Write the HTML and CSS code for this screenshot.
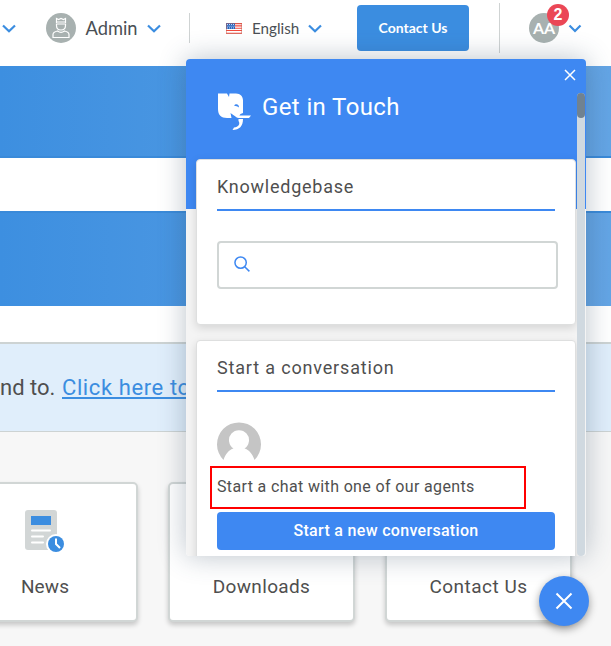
FILE: index.html
```html
<!DOCTYPE html>
<html lang="en">
<head>
<meta charset="utf-8">
<title>Help Center</title>
<link rel="stylesheet" href="styles.css">
</head>
<body>
<header class="topbar">
  <svg class="chev chev-first" viewBox="0 0 14 9"><path d="M1 1.500 7 7.300l6-5.800"/></svg>
  <svg class="avatar" viewBox="0 0 30 30"><circle cx="15" cy="15" r="15" fill="#a8b1b0"/><g fill="none" stroke="#fff" stroke-width="1.200"><path d="M10.500 10V5.500l2 1L15 5.500l2.500 1 2-1V10M10.500 9h9M10.500 11h9v1.500c0 6-9 6-9 0zM7 24.500v-3c0-2 2-3 4.500-3.500 2 1.500 5 1.500 7 0 2.500.5 4.500 1.500 4.500 3.500v3z"/></g></svg>
  <span class="name">Admin</span>
  <svg class="chev chev-name" viewBox="0 0 14 9"><path d="M1 1.500 7 7.300l6-5.800"/></svg>
  <i class="divider"></i>
  <svg class="flag" viewBox="0 0 16 11"><path fill="#fff" d="M0 0h16v11H0z"/><path stroke="#f3483c" stroke-width="1.100" d="M0 .6h16M0 2.900h16M0 5.200h16M0 7.500h16M0 10.200h16"/><path fill="#2864bd" d="M0 0h9v6H0z"/><path stroke="#c9ddf5" stroke-dasharray="1 1" d="M1 1.500h7M1.500 3.200h7M1 4.900h7"/><path fill="none" stroke="#c46357" stroke-opacity=".5" d="M.5.5h15v10H.5z"/></svg>
  <span class="lang">English</span>
  <svg class="chev chev-lang" viewBox="0 0 14 9"><path d="M1 1.500 7 7.300l6-5.800"/></svg>
  <button class="contact">Contact Us</button>
  <i class="divider tall"></i>
  <div class="initials">AA<b class="badge">2</b></div>
  <svg class="chev chev-user" viewBox="0 0 14 9"><path d="M1.500 1.500 7 7l5.500-5.500"/></svg>
</header>
<section class="hero"><div class="hero-search"></div></section>
<section class="notice"><span class="notice-text">nd to. </span><a class="notice-link">Click here to</a></section>
<section class="cards">
  <article class="card">
    <svg class="news" viewBox="0 0 42 44"><rect width="32" height="40" rx="3" fill="#d2d6d6"/><path fill="#3b8de0" d="M6 6h20v9H6z"/><path stroke="#fff" stroke-width="2" stroke-linecap="round" d="M7 20.500h18M7 26.500h11M7 32.500h11"/><circle cx="31" cy="34" r="10" fill="#fff"/><circle cx="31" cy="34" r="8" fill="#3b8de0"/><path fill="none" stroke="#fff" stroke-width="2" d="M31 28.500V34l4 4"/></svg>
    <span class="label label-news">News</span>
  </article>
  <article class="card"><span class="label label-down">Downloads</span></article>
  <article class="card"><span class="label label-contact">Contact Us</span></article>
</section>

<aside class="widget">
  <div class="widget-head">
    <svg class="logo" viewBox="0 0 34 38"><path fill="#fff" d="M0 .5h9l2 3.500.500-3.500H18c4.500 0 7 3 7 7V20l-2.500 1-3 4L16 22.500 12.500 20l1 5H9c-6 0-9-3-9-9zM20.500 22.500H33L31 25H20zM20.500 26H25c0 7-3.500 11-10.500 11l1.500-2.500c4.500-.5 6.500-3.500 4.500-6.500z"/><path fill="#3e88f2" d="M16 12.500c1.500-2 5-2 5 2-1.500-1-3-1.500-5-2z"/></svg>
    <h1 class="widget-title">Get in Touch</h1>
    <svg class="close" viewBox="0 0 12 12"><path d="m1 1 10 10M11 1 1 11"/></svg>
  </div>
  <div class="panel panel-kb">
    <h2 class="panel-title title-kb">Knowledgebase</h2>
    <div class="search"><svg viewBox="0 0 18 18"><circle cx="7" cy="7" r="6"/><path d="m11.300 11.300 5 5"/></svg></div>
  </div>
  <div class="panel panel-chat">
    <h2 class="panel-title title-chat">Start a conversation</h2>
    <svg class="agent" viewBox="0 0 44 44"><path fill="#c5c5c5" fill-rule="evenodd" d="M6.500 38A22 22 0 1 1 37.500 38C35.500 32 32 27.500 27.500 26.500a10 10 0 1 0-11 0C12 27.500 8.500 32 6.500 38z"/></svg>
    <div class="agents"><span class="agents-text">Start a chat with one of our agents</span></div>
    <button class="start"><span>Start a new conversation</span></button>
  </div>
  <i class="track"><i class="thumb"></i></i>
</aside>
<button class="launcher" aria-label="Close"><svg viewBox="0 0 18 18"><path d="m1.500 1.500 15 15M16.500 1.500l-15 15"/></svg></button>
</body>
</html>
```

FILE: styles.css
```css
* { box-sizing: border-box; }
body { margin: 0; width: 611px; height: 646px; overflow: hidden; position: relative; background: #fff; font-family: Roboto, sans-serif; color: #4f4f4f; }
button { border: 0; padding: 0; }
h1, h2 { margin: 0; font-weight: 400; }
svg { display: block; flex: none; }

.topbar { height: 66px; padding-bottom: 10px; display: flex; align-items: center; font-family: Lato, sans-serif; color: #4a4f55; white-space: nowrap; }
.topbar > * { flex: none; }
.chev { width: 14px; height: 9px; fill: none; stroke: #3b8de0; stroke-width: 2.200; }
.chev-first { margin-left: 2px; }
.avatar { width: 30px; height: 30px; margin-left: 30px; }
.name { margin-left: 9.500px; width: 61px; font-size: 18.300px; }
.divider { width: 1px; height: 30px; background: #cfd3d3; margin-left: 28.500px; }
.flag { width: 16px; height: 11px; margin-left: 36px; }
.lang { margin-left: 10px; width: 56px; font-size: 15.200px; }
.contact { width: 112px; height: 46px; margin-left: 35px; padding-bottom: 1px; border-radius: 4px; background: #3b8de0; color: #fff; font: 700 14px Lato, sans-serif; }
.tall { height: 50px; margin-left: 30px; }
.initials { position: relative; width: 30px; height: 30px; margin-left: 29px; border-radius: 50%; background: #a8b1b0; color: #fff; font: 700 16px/30px Lato, sans-serif; text-align: center; }
.badge { position: absolute; left: 18px; top: -9px; width: 22px; height: 22px; border-radius: 50%; background: #eb4756; font: 700 16px/21px "Liberation Sans", sans-serif; }
.chev-user { margin-left: 9px; }

.hero { height: 240px; padding-top: 90px; background: linear-gradient(90deg, #3d8fe0, #64a5e5); }
.hero-search { height: 57px; background: #fff; border: solid #3a8ad9; border-width: 2px 0; }
.notice { height: 90px; margin-top: 36px; border-top: 2px solid #cdd3d3; border-bottom: 1px solid #cdd3d3; background: #e0eefb; font-size: 22px; line-height: 88px; white-space: nowrap; display: flex; overflow: hidden; }
.notice-text { width: 62px; }
.notice-link { color: #3b8de0; letter-spacing: .6px; text-decoration: underline; text-decoration-thickness: 2px; text-underline-offset: 2px; text-decoration-skip-ink: none; }
.cards { height: 214px; padding-top: 50px; background: #f7f7f7; display: flex; gap: 30px; }
.card { flex: none; width: 187px; height: 140px; border: 2px solid #d1d6d5; border-radius: 5px; background: #fff; box-shadow: 0 3px 5px #0003; display: flex; flex-direction: column; align-items: center; justify-content: flex-end; padding-bottom: 22px; font-size: 19px; line-height: 22px; }
.card:first-child { margin-left: -49px; }
.news { width: 42px; height: 44px; margin: 0 0 22px 2px; }
.label-news { letter-spacing: .1px; margin-left: 1px; }
.label-down { letter-spacing: .35px; }
.label-contact { letter-spacing: .5px; }

.widget { position: absolute; left: 186px; top: 59px; width: 400px; height: 497px; overflow: clip; border-radius: 4px; background: linear-gradient(#3e88f2 150px, #f4f4f4 150px); box-shadow: 0 0 28px #30486055; }
.widget-head { height: 100px; display: flex; align-items: center; padding: 0 10px 0 32px; }
.logo { width: 34px; height: 38px; margin-top: 5px; }
.widget-title { color: #fff; font-size: 24px; letter-spacing: .38px; margin: -4px 0 0 10px; }
.close { width: 12px; height: 12px; margin: -69px 0 0 auto; fill: none; stroke: #fff; stroke-width: 1.500; }
.panel { width: 380px; margin-left: 10px; padding: 0 20px; border: 1px solid #dedfdf; border-radius: 4px; background: #fff; box-shadow: 0 3px 10px #0002; }
.panel-kb { height: 166px; }
.panel-chat { height: 240px; margin-top: 15px; }
.panel-title { width: 338px; height: 51px; padding-top: 2px; border-bottom: 2px solid #3e88f2; font-size: 18px; line-height: 50px; white-space: nowrap; }
.title-kb { letter-spacing: .75px; }
.title-chat { letter-spacing: .83px; }
.search { width: 341px; height: 48px; margin-top: 30px; border: 2px solid #d1d6d5; border-radius: 4px; padding: 13px 15px; }
.search svg { width: 17px; height: 17px; fill: none; stroke: #3e88f2; stroke-width: 1.600; }
.agent { width: 44px; height: 44px; margin-top: 30px; }
.agents { width: 316px; height: 43px; margin-left: -7px; border: 2px solid #f00; padding-left: 5px; font-size: 16px; letter-spacing: .36px; line-height: 37px; white-space: nowrap; }
.start { display: block; width: 338px; height: 38px; margin-top: 3px; padding-bottom: 1px; border-radius: 4px; background: #3e88f2; color: #fff; font: 500 16px Roboto, sans-serif; letter-spacing: .31px; }
.track { position: absolute; left: 391px; top: 34px; width: 8px; height: 463px; border-radius: 4px; background: #d0d9e0; }
.thumb { display: block; height: 25px; border-radius: 4px; background: #708291; }
.launcher { position: absolute; left: 539px; top: 576px; width: 50px; height: 50px; border-radius: 50%; background: #3e88f2; box-shadow: 0 3px 8px #0006; display: grid; place-items: center; }
.launcher svg { width: 18px; height: 18px; fill: none; stroke: #fff; stroke-width: 2; }
```
